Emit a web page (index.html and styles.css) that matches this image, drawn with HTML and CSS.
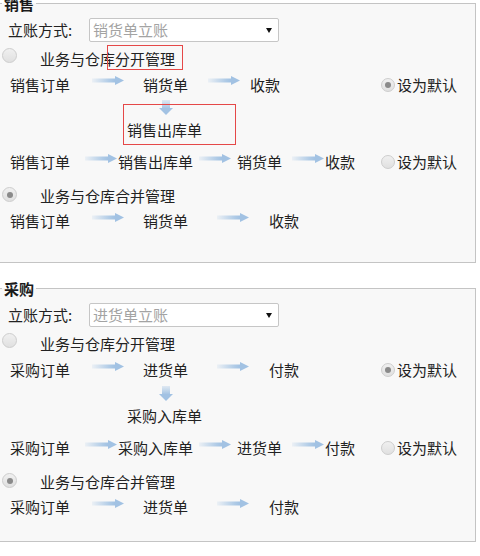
FILE: index.html
```html
<!DOCTYPE html>
<html lang="zh-CN">
<head>
<meta charset="utf-8">
<title>立账方式</title>
<link rel="stylesheet" href="styles.css">
</head>
<body>
<svg class="defs" width="0" height="0" aria-hidden="true">
  <defs>
    <linearGradient id="g-h" x1="0" y1="0" x2="1" y2="0">
      <stop offset="0" stop-color="#a6c5e4" stop-opacity="0.15"/>
      <stop offset="0.75" stop-color="#a6c5e4" stop-opacity="0.9"/>
      <stop offset="1" stop-color="#9fc0e2"/>
    </linearGradient>
    <linearGradient id="g-v" x1="0" y1="0" x2="0" y2="1">
      <stop offset="0" stop-color="#a6c5e4" stop-opacity="0.3"/>
      <stop offset="1" stop-color="#9fc0e2"/>
    </linearGradient>
    <symbol id="arrow-h" viewBox="0 0 32 9">
      <rect x="0" y="2.5" width="24" height="4" fill="url(#g-h)"/>
      <polygon points="23,0 32,4.5 23,9" fill="#a2c2e3"/>
    </symbol>
    <symbol id="arrow-v" viewBox="0 0 14 15">
      <rect x="3" y="0" width="8" height="9" fill="url(#g-v)"/>
      <polygon points="0,8 14,8 7,15" fill="#a2c2e3"/>
    </symbol>
  </defs>
</svg>

<fieldset class="box box-sale">
  <legend>销售</legend>
  <div class="mode-row">
    <span class="mode-label">立账方式:</span>
    <div class="select"><span class="select-text">销货单立账</span><span class="caret"></span></div>
  </div>
  <div class="opt-row">
    <span class="radio"></span>
    <span class="opt-text">业务与仓库<span class="mark">分开管理</span></span>
  </div>
  <div class="flow flow-a">
    <span class="step">销售订单</span>
    <svg class="arr"><use href="#arrow-h"/></svg>
    <span class="step">销货单</span>
    <svg class="arr"><use href="#arrow-h"/></svg>
    <span class="step">收款</span>
    <span class="def"><span class="radio radio-sm checked"></span>设为默认</span>
  </div>
  <div class="branch">
    <svg class="darr"><use href="#arrow-v"/></svg>
    <div class="branch-step"><span class="boxed">销售出库单</span></div>
  </div>
  <div class="flow flow-b">
    <span class="step">销售订单</span>
    <svg class="arr"><use href="#arrow-h"/></svg>
    <span class="step">销售出库单</span>
    <svg class="arr"><use href="#arrow-h"/></svg>
    <span class="step">销货单</span>
    <svg class="arr"><use href="#arrow-h"/></svg>
    <span class="step">收款</span>
    <span class="def"><span class="radio radio-sm"></span>设为默认</span>
  </div>
  <div class="opt-row opt-merge">
    <span class="radio checked"></span>
    <span class="opt-text">业务与仓库合并管理</span>
  </div>
  <div class="flow flow-c">
    <span class="step">销售订单</span>
    <svg class="arr"><use href="#arrow-h"/></svg>
    <span class="step">销货单</span>
    <svg class="arr"><use href="#arrow-h"/></svg>
    <span class="step">收款</span>
  </div>
</fieldset>

<fieldset class="box box-buy">
  <legend>采购</legend>
  <div class="mode-row">
    <span class="mode-label">立账方式:</span>
    <div class="select"><span class="select-text">进货单立账</span><span class="caret"></span></div>
  </div>
  <div class="opt-row">
    <span class="radio"></span>
    <span class="opt-text">业务与仓库分开管理</span>
  </div>
  <div class="flow flow-c">
    <span class="step">采购订单</span>
    <svg class="arr"><use href="#arrow-h"/></svg>
    <span class="step">进货单</span>
    <svg class="arr"><use href="#arrow-h"/></svg>
    <span class="step">付款</span>
    <span class="def"><span class="radio radio-sm checked"></span>设为默认</span>
  </div>
  <div class="branch">
    <svg class="darr"><use href="#arrow-v"/></svg>
    <div class="branch-step"><span>采购入库单</span></div>
  </div>
  <div class="flow flow-b">
    <span class="step">采购订单</span>
    <svg class="arr"><use href="#arrow-h"/></svg>
    <span class="step">采购入库单</span>
    <svg class="arr"><use href="#arrow-h"/></svg>
    <span class="step">进货单</span>
    <svg class="arr"><use href="#arrow-h"/></svg>
    <span class="step">付款</span>
    <span class="def"><span class="radio radio-sm"></span>设为默认</span>
  </div>
  <div class="opt-row opt-merge">
    <span class="radio checked"></span>
    <span class="opt-text">业务与仓库合并管理</span>
  </div>
  <div class="flow flow-c">
    <span class="step">采购订单</span>
    <svg class="arr"><use href="#arrow-h"/></svg>
    <span class="step">进货单</span>
    <svg class="arr"><use href="#arrow-h"/></svg>
    <span class="step">付款</span>
  </div>
</fieldset>
</body>
</html>
```

FILE: styles.css
```css
html, body {
  margin: 0;
  padding: 0;
  background: #fff;
}
body {
  font-family: "Noto Sans CJK SC", "Microsoft YaHei", sans-serif;
  font-size: 15px;
  line-height: 20px;
  color: #222;
  overflow: hidden;
}
.defs {
  position: absolute;
  width: 0;
  height: 0;
  overflow: hidden;
}

/* fieldsets */
.box {
  margin: 0 4px 0 -2px;
  padding: 0 0 26px 3px;
  border: 1px solid #c4c4c4;
  background: #f8f8f8;
  min-width: 0;
}
.box-buy {
  margin-top: 22px;
  padding-bottom: 19px;
}
.box legend {
  padding: 0 2px;
  margin: 0;
  font-weight: bold;
  font-size: 15px;
  line-height: 7px;
  color: #1a1a1a;
}

/* account mode row */
.mode-row {
  display: flex;
  align-items: center;
  height: 24px;
  margin-top: 11px;
  padding-left: 6px;
}
.mode-label {
  width: 81px;
  flex: none;
}
.select {
  box-sizing: border-box;
  width: 190px;
  height: 24px;
  border: 1px solid #c6c6c6;
  border-radius: 2px;
  background: #fff;
  display: flex;
  align-items: center;
  justify-content: space-between;
  padding: 0 6px 0 3px;
}
.select-text {
  color: #a3a3a3;
}
.caret {
  width: 0;
  height: 0;
  border-left: 3px solid transparent;
  border-right: 3px solid transparent;
  border-top: 5px solid #111;
}

/* radios */
.radio {
  box-sizing: border-box;
  width: 15px;
  height: 15px;
  border-radius: 50%;
  border: 1px solid #cdcdcd;
  background: linear-gradient(#f0f0f0, #e0e0e0);
  flex: none;
  display: flex;
  align-items: center;
  justify-content: center;
}
.radio.checked::after {
  content: "";
  width: 6px;
  height: 6px;
  border-radius: 50%;
  background: #8a8a8a;
}
.radio-sm {
  width: 14px;
  height: 14px;
  margin-right: 2px;
}

/* option rows */
.opt-row {
  display: flex;
  align-items: flex-start;
  height: 28px;
}
.opt-row .radio {
  margin-top: 6px;
}
.opt-text {
  margin-left: 23px;
  margin-top: 7px;
  line-height: 20px;
}
.opt-merge {
  height: 29px;
}
.opt-merge .radio {
  margin-top: 10px;
}
.opt-merge .opt-text {
  margin-top: 9px;
}
.mark {
  display: inline-block;
  position: relative;
  line-height: 20px;
}
.mark::after {
  content: "";
  position: absolute;
  left: -8px;
  right: -8px;
  top: -4px;
  bottom: -1px;
  border: 1px solid #e54848;
}

/* flows */
.flow {
  display: grid;
  align-items: center;
  height: 29px;
  padding-left: 8px;
}
.flow-a {
  grid-template-columns: 82px 51px 65px 42px 131px auto;
}
.flow-b {
  grid-template-columns: 75px 33px 81px 38px 55px 33px 56px auto;
  margin-top: 7px;
  height: 30px;
}
.flow-c {
  grid-template-columns: 82px 51px 74px 52px 112px auto;
  height: 30px;
}
.step {
  white-space: nowrap;
}
.arr {
  width: 32px;
  height: 9px;
  margin-bottom: 8px;
  display: block;
}
.def {
  display: flex;
  align-items: center;
  white-space: nowrap;
}

/* branch */
.branch {
  padding-top: 1px;
}
.darr {
  display: block;
  width: 14px;
  height: 15px;
  margin-left: 157px;
}
.branch-step {
  margin-top: 5px;
  margin-left: 125px;
  height: 20px;
  line-height: 20px;
}
.boxed {
  display: inline-block;
  position: relative;
}
.boxed::after {
  content: "";
  position: absolute;
  left: -4px;
  right: -34px;
  top: -16px;
  bottom: -5px;
  border: 1px solid #e54848;
}
```
